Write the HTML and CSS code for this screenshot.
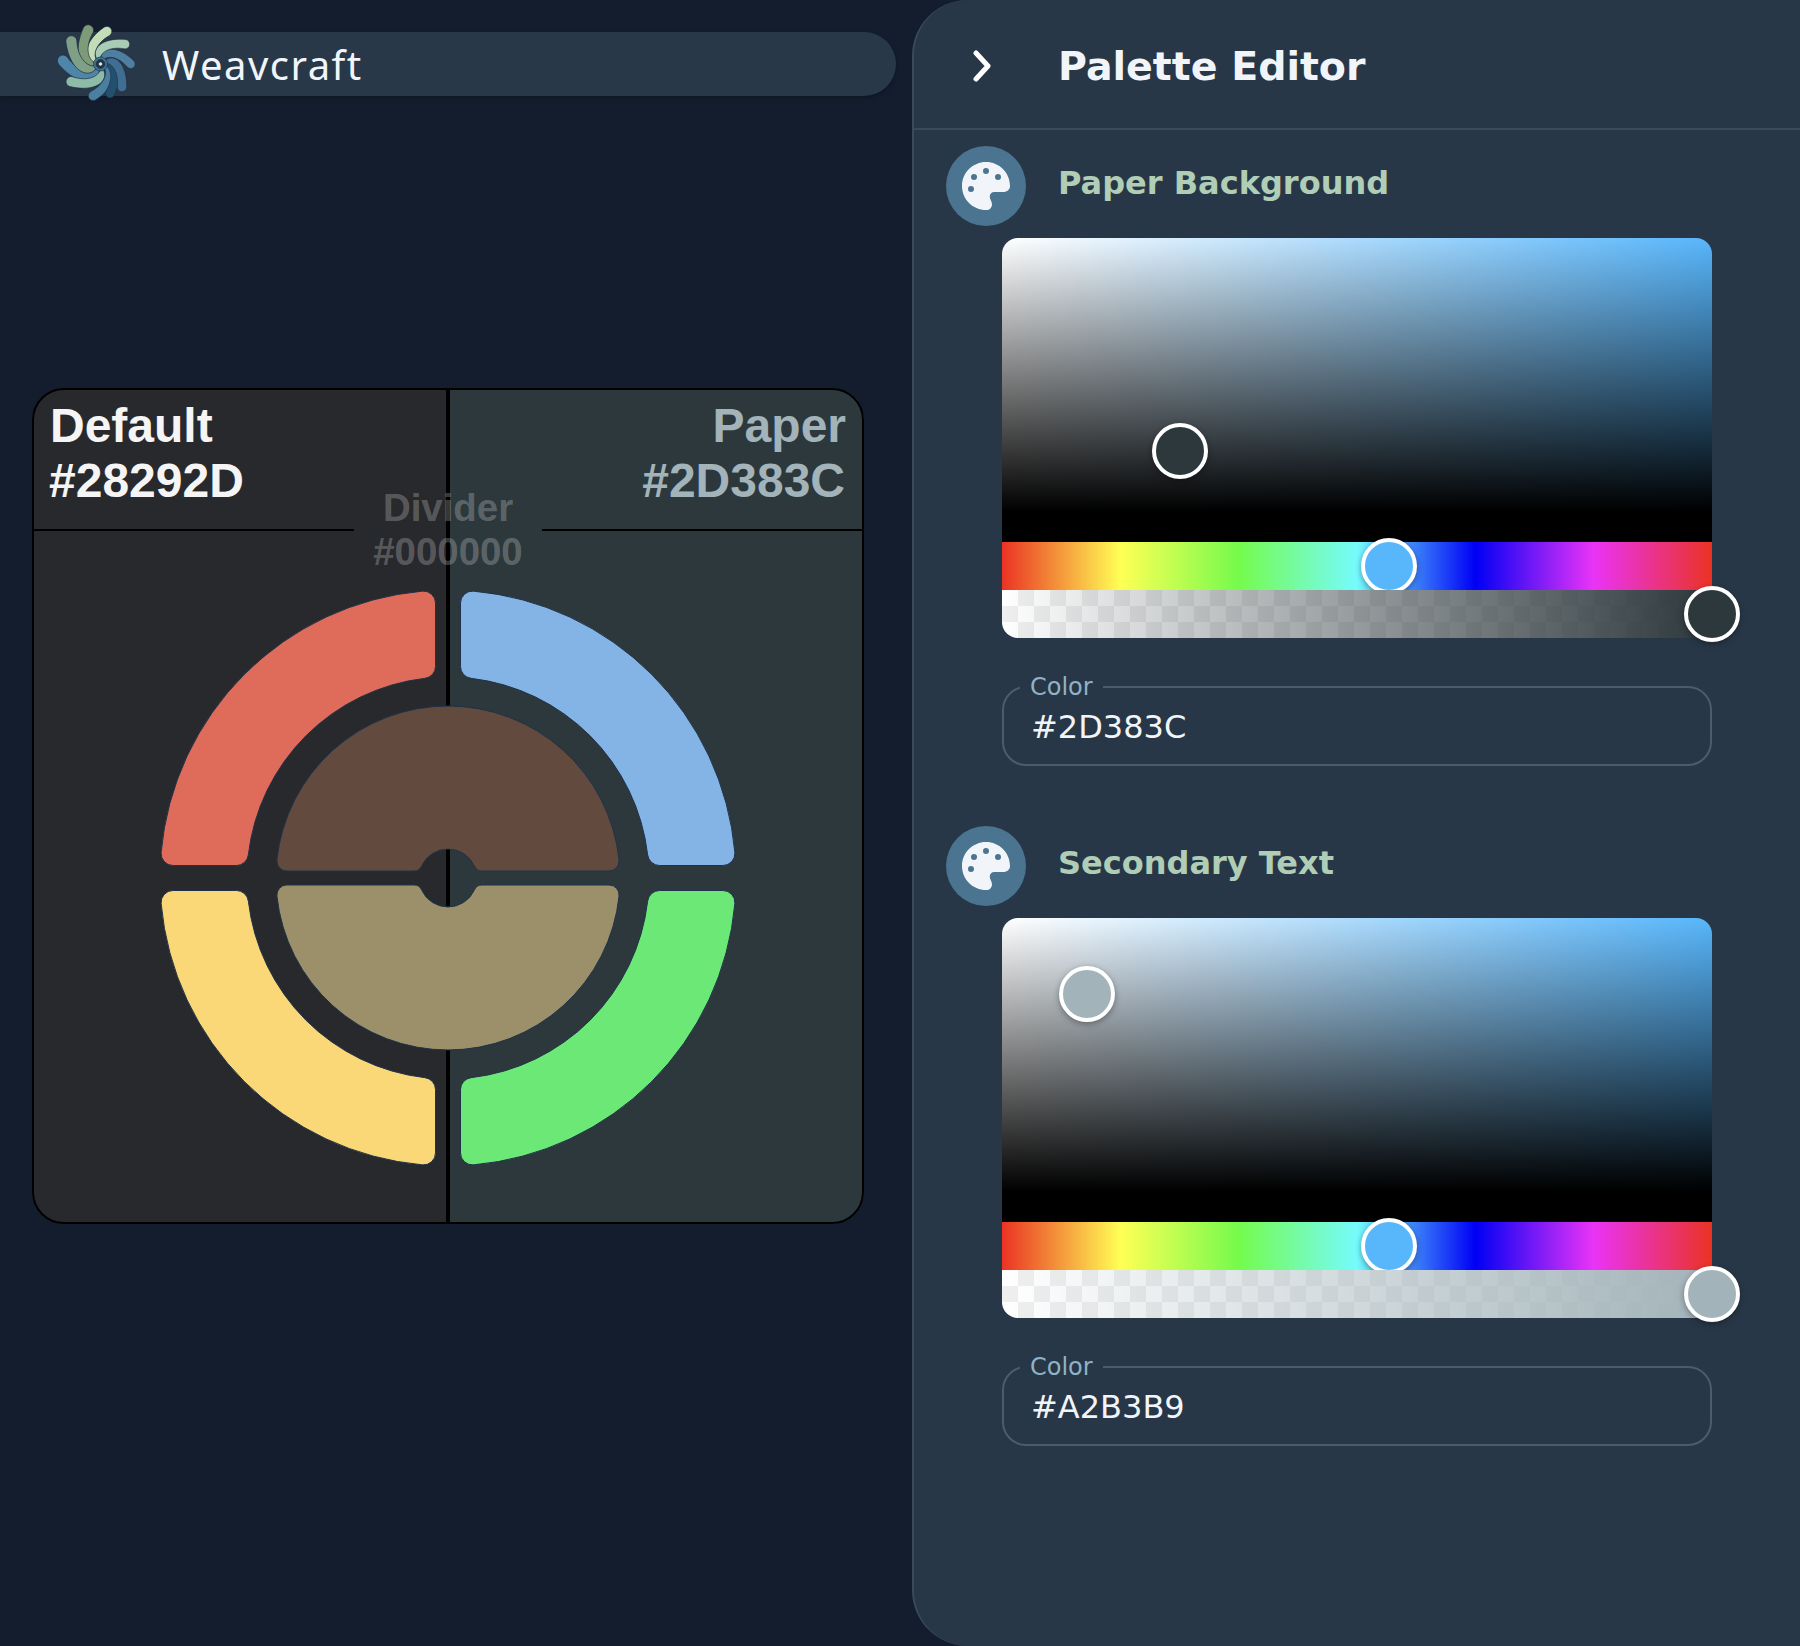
FILE: index.html
```html
<!DOCTYPE html>
<html lang="en">
  <head>
    <title>Weavcraft Palette Editor</title>
    <meta charset="UTF-8" />
    <meta name="viewport" content="width=device-width, initial-scale=1" />
    <link rel="stylesheet" href="styles.css">
  </head>

  <body>
    <main class="main">
      <header class="app-bar">
        <svg class="logo" viewBox="0 0 100 90" width="100" height="90">
          <defs>
            <path id="blade" d="M1,-2 C-3,-17 16,-25 38,-3.5 A5,5 0 0 1 30.5,3.5 C20,-9 6,-11 1,-2 Z" />
          </defs>
          <g transform="translate(50.5 45)" stroke="#1d2c40" stroke-width="0.6">
            <use href="#blade" fill="#4e85a8" transform="rotate(185) scale(1.1)" />
            <use href="#blade" fill="#8dbba8" transform="rotate(149) scale(1)" />
            <use href="#blade" fill="#4a7fa0" transform="rotate(103) scale(0.95)" />
            <use href="#blade" fill="#24506f" transform="rotate(72) scale(0.9)" />
            <use href="#blade" fill="#3f6e92" transform="rotate(47) scale(0.92)" />
            <use href="#blade" fill="#4f7fa0" transform="rotate(0) scale(0.88)" />
            <use href="#blade" fill="#a9cdb4" transform="rotate(-39) scale(0.92)" />
            <use href="#blade" fill="#c3ddb8" transform="rotate(-79) scale(0.97)" />
            <use href="#blade" fill="#7e9b79" transform="rotate(-110) scale(1.05)" />
            <use href="#blade" fill="#7fa087" transform="rotate(-142) scale(1.08)" />
            <circle r="7" fill="#3e7391" />
            <circle r="4.4" fill="#1e3348" />
            <circle r="2" fill="#edefd8" />
          </g>
        </svg>
        <span class="brand">Weavcraft</span>
      </header>

      <svg class="preview" viewBox="0 0 832 836" width="832" height="836">
        <defs>
          <clipPath id="card-clip"><rect width="832" height="836" rx="32" /></clipPath>
          <path id="ring-part" d="M12.5,-274.91 A12,12 0 0 1 25.57,-286.86 A288,288 0 0 1 286.86,-25.57 A12,12 0 0 1 274.91,-12.5 L211.59,-12.5 A12,12 0 0 1 199.67,-23.12 A201,201 0 0 0 23.12,-199.67 A12,12 0 0 1 12.5,-211.59 Z" />
          <path id="half-disc" d="M-161.1,-7 A10,10 0 0 1 -171.05,-18.05 A172,172 0 0 1 171.05,-18.05 A10,10 0 0 1 161.1,-7 L33.8,-7 A8,8 0 0 1 26.5,-11.76 A29,29 0 0 0 -26.5,-11.76 A8,8 0 0 1 -33.8,-7 Z" />
        </defs>

        <g clip-path="url(#card-clip)">
          <rect class="bg-default" width="418" height="836" />
          <rect class="bg-paper" x="418" width="414" height="836" />
          <line class="divider" x1="416" y1="0" x2="416" y2="836" />
          <line class="divider thin" x1="0" y1="142" x2="322" y2="142" />
          <line class="divider thin" x1="510" y1="142" x2="832" y2="142" />
        </g>
        <rect class="card-edge" x="1" y="1" width="830" height="834" rx="31" />

        <text class="label label-default" x="18" y="54">Default</text>
        <text class="label label-default" x="17" y="109">#28292D</text>
        <text class="label label-paper" x="814" y="54">Paper</text>
        <text class="label label-paper" x="813" y="109">#2D383C</text>
        <text class="label-small" x="416" y="133">Divider</text>
        <text class="label-small" x="416" y="177">#000000</text>

        <g class="shapes" transform="translate(416 490)">
          <use href="#ring-part" fill="#84b3e5" />
          <use href="#ring-part" fill="#df6c5a" transform="scale(-1 1)" />
          <use href="#ring-part" fill="#6be876" transform="scale(1 -1)" />
          <use href="#ring-part" fill="#fad877" transform="scale(-1 -1)" />
          <use href="#half-disc" fill="#634a3f" />
          <use href="#half-disc" fill="#9c906b" transform="scale(1 -1)" />
        </g>
      </svg>
    </main>

    <aside class="panel">
      <div class="panel-head">
        <svg class="chevron" viewBox="0 0 20 32" width="20" height="32">
          <path d="M4,3 L16,16 L4,29" />
        </svg>
        <h2 class="panel-title">Palette Editor</h2>
      </div>

      <section class="color-section">
        <div class="section-head">
          <span class="icon-circle">
            <svg viewBox="0 0 512 512" width="48" height="48">
              <path d="M512 256c0 .9 0 1.8 0 2.7c-.4 36.5-33.6 61.3-70.1 61.3H344c-26.5 0-48 21.5-48 48c0 3.4 .4 6.7 1 9.9c2.1 10.2 6.5 20 10.8 29.9c6.1 13.8 12.1 27.5 12.1 42c0 31.8-21.6 60.7-53.4 62c-3.5 .1-7 .2-10.6 .2C114.6 512 0 397.4 0 256S114.6 0 256 0S512 114.6 512 256zM128 288a32 32 0 1 0 -64 0 32 32 0 1 0 64 0zm0-96a32 32 0 1 0 0-64 32 32 0 1 0 0 64zM288 96a32 32 0 1 0 -64 0 32 32 0 1 0 64 0zm96 96a32 32 0 1 0 0-64 32 32 0 1 0 0 64z" />
            </svg>
          </span>
          <h3 class="section-title">Paper Background</h3>
        </div>
        <div class="picker picker-paper">
          <div class="sv-area"><span class="thumb" style="left: 25.07%; top: 70.07%"></span></div>
          <div class="hue-strip"><span class="thumb thumb-hue" style="left: 54.5%"></span></div>
          <div class="alpha-strip"><span class="thumb" style="left: 100%"></span></div>
        </div>
        <fieldset class="color-field">
          <legend>Color</legend>
          <span class="color-value">#2D383C</span>
        </fieldset>
      </section>

      <section class="color-section">
        <div class="section-head">
          <span class="icon-circle">
            <svg viewBox="0 0 512 512" width="48" height="48">
              <path d="M512 256c0 .9 0 1.8 0 2.7c-.4 36.5-33.6 61.3-70.1 61.3H344c-26.5 0-48 21.5-48 48c0 3.4 .4 6.7 1 9.9c2.1 10.2 6.5 20 10.8 29.9c6.1 13.8 12.1 27.5 12.1 42c0 31.8-21.6 60.7-53.4 62c-3.5 .1-7 .2-10.6 .2C114.6 512 0 397.4 0 256S114.6 0 256 0S512 114.6 512 256zM128 288a32 32 0 1 0 -64 0 32 32 0 1 0 64 0zm0-96a32 32 0 1 0 0-64 32 32 0 1 0 0 64zM288 96a32 32 0 1 0 -64 0 32 32 0 1 0 64 0zm96 96a32 32 0 1 0 0-64 32 32 0 1 0 0 64z" />
            </svg>
          </span>
          <h3 class="section-title">Secondary Text</h3>
        </div>
        <div class="picker picker-text">
          <div class="sv-area"><span class="thumb" style="left: 11.97%; top: 25%"></span></div>
          <div class="hue-strip"><span class="thumb thumb-hue" style="left: 54.5%"></span></div>
          <div class="alpha-strip"><span class="thumb" style="left: 100%"></span></div>
        </div>
        <fieldset class="color-field">
          <legend>Color</legend>
          <span class="color-value">#A2B3B9</span>
        </fieldset>
      </section>
    </aside>
  </body>
</html>
```

FILE: styles.css
```css
body {
  margin: 0;
  height: 1646px;
  overflow: hidden;
  display: flex;
  background: #141d2e;
  color: #f1f5f9;
  font-family: "DejaVu Sans", sans-serif;
}

.main {
  width: 912px;
  flex-shrink: 0;
}

.app-bar {
  display: flex;
  align-items: center;
  box-sizing: border-box;
  width: 896px;
  height: 64px;
  margin-top: 32px;
  padding-left: 50px;
  background: #283848;
  border-radius: 0 32px 32px 0;
  box-shadow: 0 2px 4px rgba(0, 0, 0, 0.25);
}

.logo {
  flex-shrink: 0;
  margin: -13px 12px -13px 0;
}

.brand {
  font-family: "Noto Sans", sans-serif;
  font-size: 40px;
  letter-spacing: 1.5px;
}

.preview {
  display: block;
  margin: 292px 0 0 32px;
}

.bg-default {
  fill: #28292d;
}

.bg-paper {
  fill: #2d383c;
}

.divider {
  stroke: #000;
  stroke-width: 4;
}

.divider.thin {
  stroke-width: 2;
}

.card-edge {
  fill: none;
  stroke: #000;
  stroke-width: 2;
}

.label {
  font-family: "Liberation Sans", sans-serif;
  font-size: 48px;
  font-weight: 700;
}

.label-default {
  fill: #f5f5f5;
}

.label-paper {
  fill: #a2b3b9;
  text-anchor: end;
}

.label-small {
  font-family: "Liberation Sans", sans-serif;
  font-size: 38.4px;
  font-weight: 700;
  fill: #fff;
  fill-opacity: 0.24;
  text-anchor: middle;
}

.shapes {
  stroke: #20324a;
  stroke-width: 1;
}

.panel {
  flex: 1;
  box-sizing: border-box;
  background: #283747;
  border-left: 2px solid #3a4a5a;
  border-radius: 56px 0 0 56px;
}

.panel-head {
  display: flex;
  align-items: center;
  box-sizing: border-box;
  height: 130px;
  padding: 4px 0 0 58px;
  border-bottom: 2px solid #3a4a5a;
}

.chevron {
  flex-shrink: 0;
  margin-right: 66px;
}

.chevron path {
  fill: none;
  stroke: #fff;
  stroke-width: 5;
  stroke-linecap: round;
  stroke-linejoin: round;
}

.panel-title {
  margin: 0;
  font-size: 39.5px;
  font-weight: 700;
}

.color-section {
  height: 680px;
  box-sizing: border-box;
  padding: 16px 0 0 32px;
}

.section-head {
  display: flex;
  align-items: center;
  gap: 32px;
}

.icon-circle {
  display: flex;
  align-items: center;
  justify-content: center;
  width: 80px;
  height: 80px;
  border-radius: 50%;
  background: #4a7490;
}

.icon-circle path {
  fill: #f1f5f9;
}

.section-title {
  margin: 0 0 6px;
  font-size: 32px;
  font-weight: 700;
  color: #b0cdb6;
}

.picker {
  width: 710px;
  margin: 12px 0 0 56px;
}

.sv-area,
.hue-strip,
.alpha-strip {
  position: relative;
}

.sv-area {
  height: 304px;
  border-radius: 16px 16px 0 0;
  background-image: linear-gradient(to top, #000 10%, transparent),
    linear-gradient(to right, #fff, #58b6fb);
}

.hue-strip {
  height: 48px;
  background: linear-gradient(
    to right,
    #ea3323,
    #ffff55 16.67%,
    #75fb4c 33.33%,
    #75fbfd 50%,
    #0000f5 66.67%,
    #ea33f7 83.33%,
    #ea3323
  );
}

.alpha-strip {
  height: 48px;
  border-radius: 0 0 16px 16px;
  background-image: linear-gradient(to right, transparent, var(--swatch)),
    repeating-conic-gradient(#efefef 0 25%, #fff 0 50%);
  background-size: auto, 32px 32px;
}

.picker-paper {
  --swatch: #2d383c;
}

.picker-text {
  --swatch: #a2b3b9;
}

.thumb {
  position: absolute;
  top: 50%;
  box-sizing: border-box;
  width: 56px;
  height: 56px;
  border: 4px solid #fff;
  border-radius: 50%;
  background: var(--swatch);
  box-shadow: 0 2px 6px rgba(0, 0, 0, 0.35);
  transform: translate(-50%, -50%);
}

.thumb-hue {
  background: #58b6fb;
}

.color-field {
  box-sizing: border-box;
  width: 710px;
  height: 93px;
  margin: 35px 0 0 56px;
  padding: 0;
  border: 2px solid #4d5c6a;
  border-radius: 24px;
}

.color-field legend {
  margin-left: 16px;
  padding: 0 10px;
  font-size: 24px;
  line-height: 28px;
  color: #90b2c4;
}

.color-value {
  display: block;
  margin-top: 7px;
  padding-left: 27px;
  font-size: 32px;
  line-height: 38px;
}
```
